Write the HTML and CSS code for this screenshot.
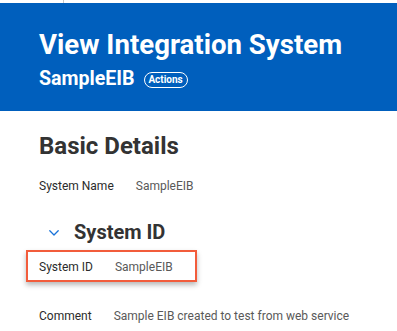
FILE: index.html
```html
<!DOCTYPE html>
<html lang="en">
<head>
<meta charset="utf-8">
<title>View Integration System</title>
<link rel="stylesheet" href="styles.css">
</head>
<body>
<div class="topstrip"><span class="tick"></span></div>
<header class="header">
  <h1 class="title">View Integration System</h1>
  <div class="subrow">
    <span class="subtitle">SampleEIB</span>
    <span class="pill">Actions</span>
  </div>
</header>
<main class="content">
  <h2 class="section-title">Basic Details</h2>
  <div class="field">
    <span class="label">System Name</span>
    <span class="value">SampleEIB</span>
  </div>
  <div class="group-head">
    <svg class="chevron" width="10" height="6" viewBox="0 0 10 6" aria-hidden="true">
      <path d="M0.8 0.8 L5 5 L9.2 0.8" fill="none" stroke="#1a73d9" stroke-width="1.3" stroke-linecap="round" stroke-linejoin="round"/>
    </svg>
    <h3 class="group-title">System ID</h3>
  </div>
  <div class="field highlight">
    <span class="label">System ID</span>
    <span class="value">SampleEIB</span>
  </div>
  <div class="field comment">
    <span class="label">Comment</span>
    <span class="value">Sample EIB created to test from web service</span>
  </div>
</main>
</body>
</html>
```
FILE: styles.css
```css
html, body {
  margin: 0;
  padding: 0;
  background: #ffffff;
  font-family: Roboto, "Liberation Sans", Arial, sans-serif;
  color: #333333;
  overflow: hidden;
}
.topstrip {
  height: 3px;
  display: flex;
}
.tick {
  margin-left: 63px;
  width: 1px;
  height: 3px;
  background: #c8c8c8;
}
.header {
  background: #005fbd;
  color: #ffffff;
  height: 108px;
  box-sizing: border-box;
  padding: 26px 0 0 39px;
}
.title {
  margin: 0;
  font-size: 27.6px;
  line-height: 32px;
  font-weight: 700;
}
.subrow {
  margin-top: 6px;
  display: flex;
  align-items: center;
  gap: 9px;
  height: 24px;
}
.subtitle {
  font-size: 19.6px;
  line-height: 24px;
  font-weight: 700;
}
.pill {
  box-sizing: border-box;
  height: 16px;
  width: 44px;
  border: 1px solid #ffffff;
  border-radius: 8px;
  font-size: 10px;
  font-weight: 700;
  line-height: 14px;
  text-align: center;
  margin-top: 2px;
}
.content {
  padding: 21px 0 0 39px;
}
.section-title {
  margin: 0;
  font-size: 24px;
  line-height: 29px;
  font-weight: 700;
  color: #333333;
}
.field {
  display: flex;
  gap: 22px;
  font-size: 12px;
  line-height: 15px;
}
.label {
  color: #2b2b2b;
}
.value {
  color: #595959;
}
.section-title + .field {
  margin-top: 18px;
}
.group-head {
  margin-top: 26px;
  display: flex;
  align-items: center;
  height: 24px;
}
.chevron {
  margin-left: 10px;
  margin-top: 2px;
}
.group-title {
  margin: 0 0 0 15px;
  font-size: 20px;
  line-height: 24px;
  font-weight: 700;
  color: #333333;
}
.highlight {
  margin-top: 6px;
  margin-left: -13px;
  width: 171px;
  box-sizing: border-box;
  border: 2px solid #f25c3b;
  padding: 8px 11px 5px;
  box-shadow: 0 3px 5px rgba(0, 0, 0, 0.28);
}
.comment {
  margin-top: 27px;
}
```
